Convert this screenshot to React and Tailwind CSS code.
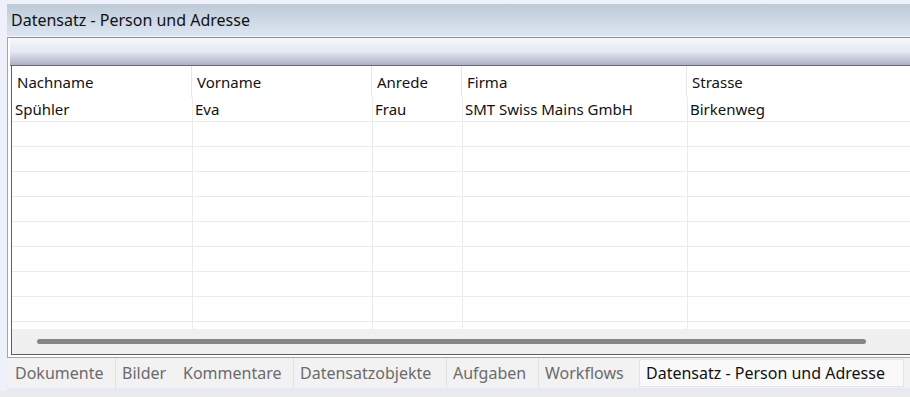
import React from "react";

const cols = [
  { w: "w-[180px]", hw: "w-[179px]" },
  { w: "w-[180px]", hw: "w-[180px]" },
  { w: "w-[90px]", hw: "w-[90px]" },
  { w: "w-[225px]", hw: "w-[225px]" },
  { w: "flex-1", hw: "flex-1" },
];

const headers = ["Nachname", "Vorname", "Anrede", "Firma", "Strasse"];
const data = ["Spühler", "Eva", "Frau", "SMT Swiss Mains GmbH", "Birkenweg"];

const tabs = [
  { t: "Dokumente", w: "w-[108px] pl-[7px]", sep: true },
  { t: "Bilder", w: "w-[61px] pl-[6px]", sep: false },
  { t: "Kommentare", w: "w-[117px] pl-[6px]", sep: true },
  { t: "Datensatzobjekte", w: "w-[153px] pl-[6px]", sep: true },
  { t: "Aufgaben", w: "w-[92px] pl-[6px]", sep: true },
  { t: "Workflows", w: "w-[100px] pl-[6px]", sep: false },
];

function Row() {
  return (
    <div className="flex h-[25px] border-b border-[#ebebeb] shrink-0">
      {cols.map((c, i) => (
        <div
          key={i}
          className={`${c.w} ${i > 0 ? "border-l border-[#ebebeb]" : ""} h-full`}
        />
      ))}
    </div>
  );
}

export default function App() {
  return (
    <div
      className="w-[910px] h-[397px] bg-[#eef0fa] overflow-hidden flex flex-col text-[15px] text-[#111]"
      style={{ fontFamily: '"Segoe UI", "Noto Sans", "Open Sans", sans-serif' }}
    >
      <div className="h-[4px] shrink-0" />
      <div className="ml-[7px] flex flex-col flex-1 min-h-0">
        {/* Title bar */}
        <div className="h-[33px] shrink-0 bg-gradient-to-b from-[#bfcad7] to-[#dbe6f2] flex items-center pl-[4px] border-b border-[#f4f7fb] text-[16px]">
          <span className="leading-none -mt-[1px]">Datensatz - Person und Adresse</span>
        </div>
        {/* Panel */}
        <div className="h-[321px] shrink-0 border-t border-[#8e8e8e] border-l border-b border-l-[#a6a6a6] border-b-[#a6a6a6] bg-white pl-[2px] pb-[2px] flex flex-col">
          <div className="h-[28px] shrink-0 bg-gradient-to-b from-[#f6f8fe] via-[#e6e8f2] to-[#adb0c5] border-b border-[#6a6a6a]" />
          <div className="ml-[1px] flex-1 min-h-0 border-l border-b border-[#5e5e5e] flex flex-col overflow-hidden">
            {/* header */}
            <div className="flex h-[31px] shrink-0">
              {headers.map((h, i) => (
                <div
                  key={i}
                  className={`${cols[i].hw} ${i > 0 ? "border-l border-[#e6e6e6]" : ""} h-full flex items-center pl-[5px] pt-[1px]`}
                >
                  {h}
                </div>
              ))}
            </div>
            {/* data row */}
            <div className="flex h-[25px] border-b border-[#ebebeb] shrink-0">
              {data.map((d, i) => (
                <div
                  key={i}
                  className={`${cols[i].w} ${i > 0 ? "border-l border-[#ebebeb] pl-[2px]" : "pl-[3px]"} h-full flex items-center whitespace-nowrap`}
                >
                  {d}
                </div>
              ))}
            </div>
            <div className="flex-1 min-h-0 overflow-hidden flex flex-col">
              {Array.from({ length: 9 }).map((_, i) => (
                <Row key={i} />
              ))}
            </div>
            {/* scrollbar */}
            <div className="h-[25px] shrink-0 bg-[#f0f0f0] flex items-center">
              <div className="ml-[25px] w-[829px] h-[5px] rounded-full bg-[#858585]" />
            </div>
          </div>
        </div>
        {/* Tabs */}
        <div className="h-[30px] shrink-0 bg-[#f2f2f2] ml-[1px] flex items-center text-[#6b6b6b] text-[16px]">
          {tabs.map((t, i) => (
            <div
              key={i}
              className={`${t.w} h-full flex items-center whitespace-nowrap ${t.sep ? "border-r border-[#e2e2e2]" : ""}`}
            >
              {t.t}
            </div>
          ))}
          <div className="w-[265px] h-[28px] bg-[#f9f9f9] border border-[#e4e4e4] flex items-center pl-[6px] text-[#111] whitespace-nowrap">
            Datensatz - Person und Adresse
          </div>
        </div>
        <div className="h-[3px] shrink-0 bg-[#e6e8f6]" />
        <div className="flex-1 bg-[#ebebeb] -ml-[7px]" />
      </div>
    </div>
  );
}
